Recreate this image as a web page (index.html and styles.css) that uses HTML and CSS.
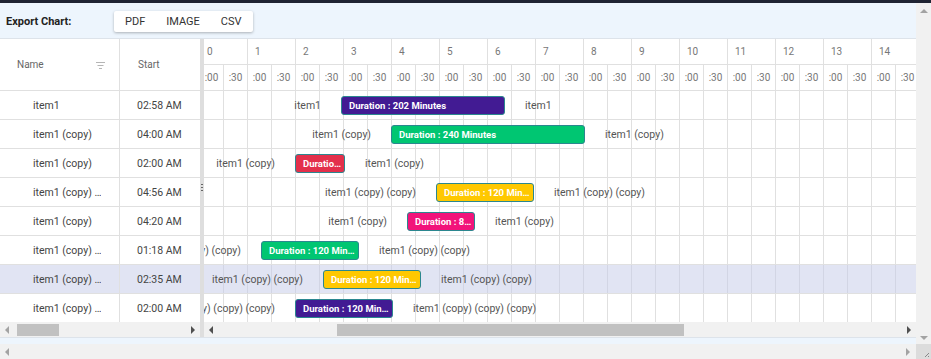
FILE: index.html
```html
<!DOCTYPE html>
<html lang="en">
<head>
<meta charset="UTF-8">
<title>Gantt Chart</title>
<link rel="stylesheet" href="styles.css">
</head>
<body>
<div class="topline"></div>
<div class="frame">
    <div class="main">
        <div class="toolbar">
            <span class="toolbar-title">Export Chart:</span>
            <div class="export">
                <span>PDF</span>
                <span>IMAGE</span>
                <span>CSV</span>
            </div>
        </div>

        <div class="gantt">
            <!-- left grid -->
            <section class="grid">
                <div class="grid-head">
                    <div class="col-name">Name
                        <svg class="filter" width="9" height="7" viewBox="0 0 9 7"><path d="M0 .5h9M1.5 3.5h6M3 6.5h3" stroke="#b5b5b5" stroke-width="1"/></svg>
                    </div>
                    <div class="col-start">Start</div>
                </div>
                <div class="grid-body">
                    <div class="grow"><div class="col-name"><span class="ellip">item1</span></div><div class="col-start">02:58 AM</div></div>
                    <div class="grow"><div class="col-name"><span class="ellip">item1 (copy)</span></div><div class="col-start">04:00 AM</div></div>
                    <div class="grow"><div class="col-name"><span class="ellip">item1 (copy)</span></div><div class="col-start">02:00 AM</div></div>
                    <div class="grow"><div class="col-name"><span class="ellip">item1 (copy) …</span></div><div class="col-start">04:56 AM</div></div>
                    <div class="grow"><div class="col-name"><span class="ellip">item1 (copy)</span></div><div class="col-start">04:20 AM</div></div>
                    <div class="grow"><div class="col-name"><span class="ellip">item1 (copy) …</span></div><div class="col-start">01:18 AM</div></div>
                    <div class="grow selected"><div class="col-name"><span class="ellip">item1 (copy) …</span></div><div class="col-start">02:35 AM</div></div>
                    <div class="grow"><div class="col-name"><span class="ellip">item1 (copy) …</span></div><div class="col-start">02:00 AM</div></div>
                </div>
                <div class="hbar">
                    <i class="arr-l off"></i>
                    <b class="thumb grid-thumb"></b>
                    <i class="arr-r"></i>
                </div>
            </section>

            <div class="splitter"><span class="grip"></span></div>

            <!-- timeline -->
            <section class="chart">
                <div class="chart-clip">
                    <div class="chart-inner">
                        <div class="hours">
                            <div>0</div><div>1</div><div>2</div><div>3</div><div>4</div>
                            <div>5</div><div>6</div><div>7</div><div>8</div><div>9</div>
                            <div>10</div><div>11</div><div>12</div><div>13</div><div>14</div>
                        </div>
                        <div class="halves">
                            <div>:00</div><div>:30</div><div>:00</div><div>:30</div><div>:00</div><div>:30</div>
                            <div>:00</div><div>:30</div><div>:00</div><div>:30</div><div>:00</div><div>:30</div>
                            <div>:00</div><div>:30</div><div>:00</div><div>:30</div><div>:00</div><div>:30</div>
                            <div>:00</div><div>:30</div><div>:00</div><div>:30</div><div>:00</div><div>:30</div>
                            <div>:00</div><div>:30</div><div>:00</div><div>:30</div><div>:00</div><div>:30</div>
                        </div>
                        <div class="crow">
                            <div class="bar purple" style="left:141px;width:164px">
                                <span class="lbl-l">item1</span><span class="bar-text">Duration : 202 Minutes</span><span class="lbl-r">item1</span>
                            </div>
                        </div>
                        <div class="crow">
                            <div class="bar green" style="left:191px;width:194px">
                                <span class="lbl-l">item1 (copy)</span><span class="bar-text">Duration : 240 Minutes</span><span class="lbl-r">item1 (copy)</span>
                            </div>
                        </div>
                        <div class="crow">
                            <div class="bar red" style="left:95px;width:50px">
                                <span class="lbl-l">item1 (copy)</span><span class="bar-text">Duration : 60 Minutes</span><span class="lbl-r">item1 (copy)</span>
                            </div>
                        </div>
                        <div class="crow">
                            <div class="bar yellow" style="left:236px;width:98px">
                                <span class="lbl-l">item1 (copy) (copy)</span><span class="bar-text">Duration : 120 Minutes</span><span class="lbl-r">item1 (copy) (copy)</span>
                            </div>
                        </div>
                        <div class="crow">
                            <div class="bar pink" style="left:207px;width:68px">
                                <span class="lbl-l">item1 (copy)</span><span class="bar-text">Duration : 84 Minutes</span><span class="lbl-r">item1 (copy)</span>
                            </div>
                        </div>
                        <div class="crow">
                            <div class="bar green" style="left:61px;width:98px">
                                <span class="lbl-l">item1 (copy) (copy)</span><span class="bar-text">Duration : 120 Minutes</span><span class="lbl-r">item1 (copy) (copy)</span>
                            </div>
                        </div>
                        <div class="crow selected">
                            <div class="bar yellow" style="left:123px;width:98px">
                                <span class="lbl-l">item1 (copy) (copy)</span><span class="bar-text">Duration : 120 Minutes</span><span class="lbl-r">item1 (copy) (copy)</span>
                            </div>
                        </div>
                        <div class="crow">
                            <div class="bar purple" style="left:95px;width:98px">
                                <span class="lbl-l">item1 (copy) (copy) (copy)</span><span class="bar-text">Duration : 120 Minutes</span><span class="lbl-r">item1 (copy) (copy) (copy)</span>
                            </div>
                        </div>
                    </div>
                </div>
                <div class="hbar">
                    <i class="arr-l"></i>
                    <b class="thumb chart-thumb"></b>
                    <i class="arr-r"></i>
                </div>
            </section>
        </div>

        <div class="band"></div>
    </div>

    <div class="vbar">
        <i class="arr-u"></i>
        <i class="arr-d"></i>
    </div>
</div>
<div class="pagebar">
    <div class="hbar page">
        <i class="arr-l off"></i>
        <i class="arr-r off"></i>
    </div>
    <div class="corner">
        <svg width="15" height="15" viewBox="0 0 15 15"><path d="M13 9l-4 4M13 12l-1 1" stroke="#888" stroke-width="1"/></svg>
    </div>
</div>
</body>
</html>
```
FILE: styles.css
```css
:root{
    --line:#e0e0e0;
    --sel:#e1e4f3;
    --scroll:#f1f1f1;
    --band:#edf5fd;
}
*{box-sizing:border-box;margin:0;padding:0;}
body{
    font-family:Roboto,'Liberation Sans',sans-serif;
    width:931px;
    height:359px;
    overflow:hidden;
    background:#fff;
    color:#444;
}
.topline{height:3px;background:#1f2433;}
.frame{display:flex;height:341px;}
.main{width:916px;display:flex;flex-direction:column;}

/* toolbar */
.toolbar{
    height:36px;
    background:var(--band);
    border-bottom:1px solid #dde3ea;
    display:flex;
    align-items:center;
    padding-left:6px;
    padding-top:1px;
}
.toolbar-title{font-size:11px;font-weight:700;color:#222;width:108px;}
.export{
    display:flex;
    align-items:center;
    height:21px;
    background:#fff;
    border-radius:2px;
    box-shadow:0 1px 3px rgba(0,0,0,.28);
    padding:0 1px;
}
.export span{padding:0 10px;font-size:11px;color:#333;}
.export span + span{margin-left:1px;}

/* gantt */
.gantt{display:flex;height:298px;}
.grid{width:200px;display:flex;flex-direction:column;}
.grid-head{
    height:52px;
    display:flex;
    border-bottom:1px solid var(--line);
    font-size:10px;
    color:#666;
}
.grid-head .col-name{padding-left:17px;position:relative;}
.filter{position:absolute;left:96px;top:23px;}
.grid-head .col-start{padding-left:18px;}
.col-name{width:120px;border-right:1px solid var(--line);display:flex;align-items:center;padding-left:33px;padding-right:14px;}
.col-start{flex:1;display:flex;align-items:center;padding-left:17px;}
.grid-body{height:231px;overflow:hidden;}
.grow{
    height:29px;
    display:flex;
    border-bottom:1px solid var(--line);
    font-size:10.5px;
    color:#444;
}
.ellip{white-space:nowrap;overflow:hidden;text-overflow:ellipsis;}
.selected{background-color:var(--sel);}

.splitter{width:4px;background:#dedede;position:relative;}
.grip{
    position:absolute;
    left:1px;
    top:144px;
    width:2px;
    height:8px;
    background:radial-gradient(circle,#666 0.8px,transparent 1.1px) 0 0/2px 3px;
}

.chart{flex:1;display:flex;flex-direction:column;min-width:0;}
.chart-clip{height:283px;overflow:hidden;}
.chart-inner{margin-left:-4px;width:720px;}
.hours,.halves{display:flex;border-bottom:1px solid var(--line);font-size:10px;color:#777;}
.hours div{width:48px;height:25px;line-height:25px;padding-left:7px;border-right:1px solid var(--line);flex:none;}
.halves div{width:24px;height:25px;line-height:25px;text-align:center;border-right:1px solid var(--line);flex:none;}
.crow{
    height:29px;
    position:relative;
    border-bottom:1px solid var(--line);
    background-image:repeating-linear-gradient(to right,transparent 0 23px,var(--line) 23px 24px);
}
.crow.selected{background-image:repeating-linear-gradient(to right,transparent 0 23px,#d2d5e4 23px 24px);}

.bar{
    position:absolute;
    top:5px;
    height:19px;
    border:1px solid #2b878f;
    border-radius:3px;
    color:#fff;
    font-size:9.5px;
    font-weight:700;
    line-height:17px;
}
.bar-text{display:block;padding-left:7px;padding-right:2px;white-space:nowrap;overflow:hidden;text-overflow:ellipsis;}
.lbl-l,.lbl-r{
    position:absolute;
    top:0;
    white-space:nowrap;
    font-size:10.5px;
    font-weight:400;
    color:#555;
}
.lbl-l{right:calc(100% + 21px);}
.lbl-r{left:calc(100% + 21px);}
.purple{background:#421b93;}
.green{background:#00c672;}
.red{background:#e3304b;}
.yellow{background:#ffc800;}
.pink{background:#f2137a;}

/* scrollbars */
.hbar{
    height:15px;
    background:var(--scroll);
    display:flex;
    align-items:center;
    padding:0 5px;
}
.thumb{height:12px;background:#c1c1c1;display:block;}
.grid-thumb{width:42px;margin-left:8px;}
.chart-thumb{width:347px;margin-left:124px;}
.hbar .arr-r{margin-left:auto;}
.arr-l,.arr-r,.arr-u,.arr-d{display:block;width:0;height:0;border:4px solid transparent;}
.arr-l{border-right-color:#505050;border-left-width:0;}
.arr-r{border-left-color:#505050;border-right-width:0;}
.arr-l.off{border-right-color:#a3a3a3;}
.arr-r.off{border-left-color:#a3a3a3;}

.band{flex:1;background:var(--band);border-top:1px solid #dde3ea;}

.vbar{
    width:15px;
    background:var(--scroll);
    display:flex;
    flex-direction:column;
    align-items:center;
    justify-content:space-between;
    padding:6px 0 4px;
}
.arr-u{border-bottom-color:#a3a3a3;border-top-width:0;}
.arr-d{border-top-color:#a3a3a3;border-bottom-width:0;}

.pagebar{display:flex;height:15px;}
.pagebar .page{width:916px;}
.pagebar .page .arr-r{margin-right:1px;}
.corner{width:15px;background:#dcdcdc;}
.corner svg{display:block;}
```
